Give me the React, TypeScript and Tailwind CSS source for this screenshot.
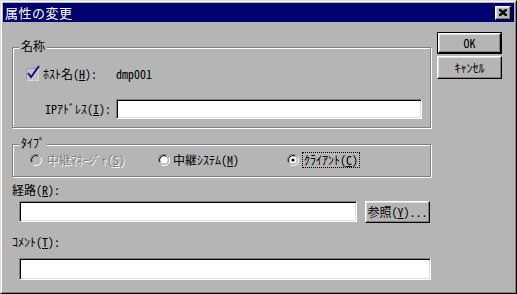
const face = "bg-[#b5b5b5]";

const font = { fontFamily: '"Noto Sans Mono CJK JP", "Noto Sans CJK JP", "MS UI Gothic", sans-serif' };

const Raised = ({ className = "", children }: { className?: string; children?: React.ReactNode }) => (
  <div
    className={`flex items-center justify-center border border-t-white border-l-white border-r-black border-b-black shadow-[inset_-1px_-1px_0_#808080,inset_1px_1px_0_#dfdfdf] ${face} ${className}`}
  >
    {children}
  </div>
);

const Field = ({ className = "" }: { className?: string }) => (
  <div
    className={`bg-white border border-t-[#808080] border-l-[#808080] border-r-white border-b-white shadow-[inset_1px_1px_0_#000,inset_-1px_-1px_0_#dfdfdf] ${className}`}
  />
);

const Group = ({ label, className = "", children }: { label: string; className?: string; children?: React.ReactNode }) => (
  <div className={`relative border border-[#808080] shadow-[inset_1px_1px_0_#fff,1px_1px_0_#fff] ${className}`}>
    <span className={`absolute left-[6px] top-[-9px] px-[2px] text-[12px] leading-[14px] ${face}`}>{label}</span>
    {children}
  </div>
);

const Radio = ({ state }: { state: "off" | "dim" | "on" }) => (
  <svg width="12" height="12" viewBox="0 0 12 12" className="shrink-0">
    <path d="M1 8.5 A5.5 5.5 0 0 1 8.5 1" stroke="#808080" strokeWidth="1" fill="none" />
    <path d="M2 8 A4.5 4.5 0 0 1 8 2" stroke="#000" strokeWidth="1" fill="none" />
    <path d="M3.5 11 A5.5 5.5 0 0 0 11 3.5" stroke="#fff" strokeWidth="1" fill="none" />
    <circle cx="6" cy="6" r="3.6" fill={state === "dim" ? "#b5b5b5" : "#fff"} />
    {state === "on" && <circle cx="6" cy="6" r="1.6" fill="#000" />}
  </svg>
);

export default function App() {
  return (
    <div className={`w-[517px] h-[294px] border border-t-[#dfdfdf] border-l-[#dfdfdf] border-r-black border-b-black ${face}`} style={font}>
      <div className="h-full border border-t-white border-l-white border-r-[#808080] border-b-[#808080] p-px flex flex-col">
        {/* title bar */}
        <div className="h-[19px] bg-[#000070] flex items-center justify-between pl-[2px] pr-[3px]">
          <span className="text-white text-[13px] leading-[15px] tracking-[0.5px]">属性の変更</span>
          <Raised className="w-[16px] h-[14px]">
            <svg width="8" height="7" viewBox="0 0 8 7">
              <path d="M0 0 L8 7 M1 0 L8 6 M0 1 L7 7 M8 0 L0 7 M7 0 L0 6 M8 1 L1 7" stroke="#000" strokeWidth="1.1" />
            </svg>
          </Raised>
        </div>

        <div className="flex-1 flex pl-[9px] text-[12px] leading-[14px] text-black">
          {/* left column */}
          <div className="w-[419px] flex flex-col">
            <Group label="名称" className="mt-[25px] h-[81px]">
              <div className="pt-[19px] pl-[13px]">
                <div className="flex items-center h-[14px]">
                  <svg width="14" height="16" viewBox="0 0 14 16" className="mt-[-3px]">
                    <rect x="0.5" y="3.5" width="12" height="12" fill="#c4c4c4" stroke="#d8d8d8" />
                    <path d="M0.5 15.5 V3.5 H12.5" stroke="#9a9a9a" fill="none" />
                    <path d="M2 8 L5 12 L13 1" stroke="#1010a0" strokeWidth="2" fill="none" />
                  </svg>
                  <span className="ml-[3px] w-[73px]">
                    ﾎｽﾄ名(<u>H</u>):
                  </span>
                  <span>dmp001</span>
                </div>
                <div className="flex items-center mt-[18px] pl-[19px]">
                  <span className="w-[71px]">
                    IPｱﾄﾞﾚｽ(<u>I</u>):
                  </span>
                  <Field className="w-[306px] h-[20px]" />
                </div>
              </div>
            </Group>

            <Group label="ﾀｲﾌﾟ" className="mt-[16px] h-[33px]">
              <div className="flex items-center h-full pb-[2px] pl-[17px]">
                <div className="w-[128px] flex items-center gap-[5px]">
                  <Radio state="dim" />
                  <span className="text-[#808080] [text-shadow:1px_1px_0_#fff]">
                    中継ﾏﾈｰｼﾞｬ(<u>S</u>)
                  </span>
                </div>
                <div className="w-[129px] flex items-center gap-[3px]">
                  <Radio state="off" />
                  <span>
                    中継ｼｽﾃﾑ(<u>M</u>)
                  </span>
                </div>
                <div className="flex items-center gap-[3px]">
                  <Radio state="on" />
                  <span className="border border-dotted border-black px-[1px] leading-[14px]">
                    ｸﾗｲｱﾝﾄ(<u>C</u>)
                  </span>
                </div>
              </div>
            </Group>

            <div className="mt-[6px] h-[14px]">
              経路(<u>R</u>):
            </div>
            <div className="mt-[4px] ml-[7px] flex items-start gap-[8px]">
              <Field className="w-[338px] h-[21px]" />
              <Raised className="w-[65px] h-[22px]">
                参照(<u>Y</u>)...
              </Raised>
            </div>

            <div className="mt-[12px] h-[14px]">
              ｺﾒﾝﾄ(<u>T</u>):
            </div>
            <Field className="mt-[9px] ml-[7px] w-[412px] h-[22px]" />
          </div>

          {/* buttons */}
          <div className="ml-[6px] w-[65px] pt-[10px] flex flex-col gap-[2px]">
            <div className="border border-black">
              <Raised className="h-[20px]">OK</Raised>
            </div>
            <Raised className="h-[23px]">ｷｬﾝｾﾙ</Raised>
          </div>
        </div>
      </div>
    </div>
  );
}
